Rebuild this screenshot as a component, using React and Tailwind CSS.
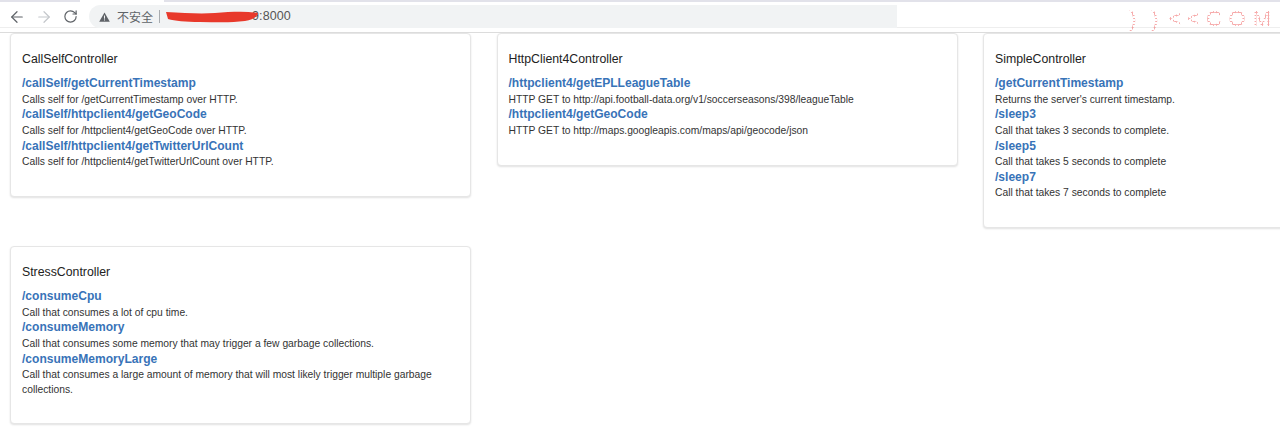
import React from "react";
import { ArrowLeft, ArrowRight, RotateCw } from "lucide-react";

const font = "font-['Liberation_Sans',Arial,sans-serif]";

const Endpoint = ({ path, text }) => (
  <div>
    <a href="#" className="block text-[12.05px] leading-[16.6px] font-bold text-[#3873b8]">{path}</a>
    <p className="mt-[1px] -mb-[1px] text-[10.3px] leading-[14.7px] text-[#333]">{text}</p>
  </div>
);

const Card = ({ title, items, height }) => (
  <div className={`bg-white border border-[#e6e6e6] rounded-[4px] shadow-[0_1px_2px_rgba(0,0,0,0.12)] px-[11px] pt-[18px] w-[461px] shrink-0 ${height}`}>
    <h3 className="text-[12.3px] leading-[15px] text-[#222] mb-[8px]">{title}</h3>
    {items.map((it) => <Endpoint key={it[0]} path={it[0]} text={it[1]} />)}
  </div>
);

const watermark = [
  [")", "w-[22px]"],
  [")", "w-[22px]"],
  ["<", "w-[18px]"],
  ["<", "w-[19px]"],
  ["C", "w-[22px]"],
  ["O", "w-[24px]"],
  ["M", "w-[26px]"],
];

const Toolbar = () => (
  <div className="h-[33px] bg-white border-b border-[#dcdcdc] relative">
    <div className="h-[2px] flex">
      <div className="w-[80px] bg-[#e2e2ea]" />
      <div className="w-[84px]" />
      <div className="flex-1 bg-[#e2e2ea]" />
    </div>
    <div className="h-[26px] flex items-end border-b border-[#eeeeee]">
      <div className="h-[23px] -mb-px flex items-center pl-[3px]">
        <div className="w-[27px] flex justify-center"><ArrowLeft size={18} strokeWidth={1.6} className="text-[#5f6368]" /></div>
        <div className="w-[27px] flex justify-center"><ArrowRight size={18} strokeWidth={1.6} className="text-[#c4c7cb]" /></div>
        <div className="w-[27px] flex justify-center"><RotateCw size={15} strokeWidth={1.9} className="text-[#5f6368]" /></div>
      </div>
      <div className="ml-[5px] w-[808px] h-[23px] -mb-px rounded-l-full bg-[#f1f3f4] flex items-center text-[12px] text-[#5f6368]">
        <svg width="11" height="10" viewBox="0 0 11 10" className="ml-[10px]">
          <path d="M5.5 0.5 L10.8 9.7 H0.2 Z" fill="#5f6368" />
          <rect x="5" y="3.5" width="1" height="3.2" fill="#f1f3f4" />
          <rect x="5" y="7.4" width="1" height="1.1" fill="#f1f3f4" />
        </svg>
        <span className="ml-[7px] font-['Noto_Sans_CJK_SC',sans-serif]">不安全</span>
        <span className="ml-[6px] w-px h-[13px] bg-[#a8acb0]" />
        <span className="ml-[92px] text-[12.5px] text-[#555] tracking-[0.1px]">9:8000</span>
      </div>
    </div>
    {/* red scribble over the address */}
    <svg width="94" height="13" viewBox="0 0 94 13" className="absolute left-[165px] top-[11px]">
      <path d="M1 1 C 20 2, 35 3, 50 2 S 80 0, 93 2 C 92 6, 88 9, 80 10 C 65 12, 50 11, 35 11 S 10 10, 3 8 Z" fill="#e8392b" />
    </svg>
    {/* dotted watermark over the toolbar line */}
    <div className="absolute left-[1122px] top-[5px] flex text-[22px] leading-[28px] opacity-50">
      {watermark.map(([c, w], i) => (
        <span key={i} className={`${w} text-center text-transparent bg-clip-text bg-[radial-gradient(#e55_50%,transparent_60%)] bg-[length:3px_3px]`}>{c}</span>
      ))}
    </div>
  </div>
);

export default function App() {
  return (
    <div className={`${font} w-[1280px] h-[436px] overflow-hidden bg-white`}>
      <Toolbar />
      <div className="pl-[10px] grid grid-cols-[461px_461px_461px] gap-x-[25.5px] gap-y-[18px] items-start w-[1500px]">
        <Card
          title="CallSelfController"
          height="h-[164px]"
          items={[
            ["/callSelf/getCurrentTimestamp", "Calls self for /getCurrentTimestamp over HTTP."],
            ["/callSelf/httpclient4/getGeoCode", "Calls self for /httpclient4/getGeoCode over HTTP."],
            ["/callSelf/httpclient4/getTwitterUrlCount", "Calls self for /httpclient4/getTwitterUrlCount over HTTP."],
          ]}
        />
        <Card
          title="HttpClient4Controller"
          height="h-[133px]"
          items={[
            ["/httpclient4/getEPLLeagueTable", "HTTP GET to http://api.football-data.org/v1/soccerseasons/398/leagueTable"],
            ["/httpclient4/getGeoCode", "HTTP GET to http://maps.googleapis.com/maps/api/geocode/json"],
          ]}
        />
        <Card
          title="SimpleController"
          height="h-[195px]"
          items={[
            ["/getCurrentTimestamp", "Returns the server's current timestamp."],
            ["/sleep3", "Call that takes 3 seconds to complete."],
            ["/sleep5", "Call that takes 5 seconds to complete"],
            ["/sleep7", "Call that takes 7 seconds to complete"],
          ]}
        />
        <Card
          title="StressController"
          height="h-[178px]"
          items={[
            ["/consumeCpu", "Call that consumes a lot of cpu time."],
            ["/consumeMemory", "Call that consumes some memory that may trigger a few garbage collections."],
            ["/consumeMemoryLarge", "Call that consumes a large amount of memory that will most likely trigger multiple garbage collections."],
          ]}
        />
      </div>
    </div>
  );
}
